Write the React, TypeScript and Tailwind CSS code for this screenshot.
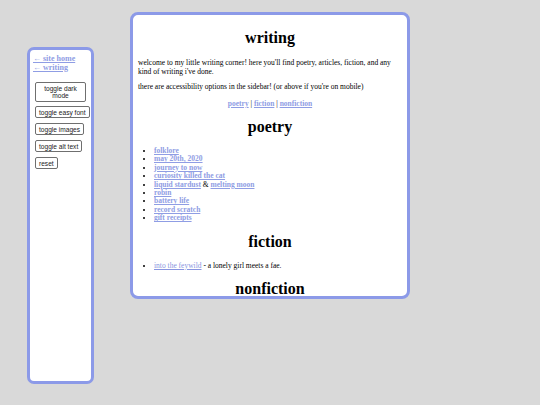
import React from "react";

const linkCls = "text-[#8f9de4] font-bold underline";
const btnCls =
  "h-[12px] bg-white border border-[#6f6f6f] rounded-[2px] text-[6.6px] leading-[7px] text-[#222] px-[3px] whitespace-nowrap";

export default function App() {
  const poems = [
    "folklore",
    "may 20th, 2020",
    "journey to now",
    "curiosity killed the cat",
  ];
  const poems2 = ["robin", "battery life", "record scratch", "gift receipts"];
  return (
    <div
      className="w-[540px] h-[405px] bg-[#d9d9d9] flex items-start overflow-hidden"
      style={{ fontFamily: '"Liberation Serif", "Times New Roman", serif' }}
    >
      <div className="ml-[27px] mt-[47px] w-[67px] h-[337px] bg-white border-[3px] border-[#8c9ae8] rounded-[7px] px-[3px] pt-[4px] flex flex-col">
        <a className={linkCls + " text-[8px] leading-[9px]"}>← site home</a>
        <a className={linkCls + " text-[8px] leading-[9px]"}>← writing</a>
        <div
          className="flex flex-col items-start gap-[5px] mt-[10px] ml-[2px]"
          style={{ fontFamily: '"Liberation Sans", Arial, sans-serif' }}
        >
          <button className="w-[51px] h-[20px] -mb-[1px] bg-white border border-[#6f6f6f] rounded-[2px] text-[6.6px] leading-[7px] text-[#222] px-[3px]">
            toggle dark
            <br />
            mode
          </button>
          <button className={btnCls}>toggle easy font</button>
          <button className={btnCls}>toggle images</button>
          <button className={btnCls}>toggle alt text</button>
          <button className={btnCls}>reset</button>
        </div>
      </div>
      <div className="ml-[36px] mt-[12px] w-[280px] h-[287px] bg-white border-[3px] border-[#8c9ae8] rounded-[8px] px-[5px] overflow-hidden text-black">
        <h1 className="text-[16px] leading-[18px] font-bold text-center mt-[14px]">writing</h1>
        <p className="text-[7.5px] leading-[9px] mt-[11px]">
          welcome to my little writing corner! here you'll find poetry, articles, fiction, and any kind of writing i've done.
        </p>
        <p className="text-[7.5px] leading-[9px] mt-[6px]">
          there are accessibility options in the sidebar! (or above if you're on mobile)
        </p>
        <p className="text-[7.5px] leading-[9px] mt-[8px] text-center">
          <a className={linkCls}>poetry</a> | <a className={linkCls}>fiction</a> |{" "}
          <a className={linkCls}>nonfiction</a>
        </p>
        <h1 className="text-[16px] leading-[18px] font-bold text-center mt-[10px]">poetry</h1>
        <ul className="list-disc pl-[16px] text-[7.5px] leading-[8.4px] mt-[11px]">
          {poems.map((p) => (
            <li key={p}>
              <a className={linkCls}>{p}</a>
            </li>
          ))}
          <li>
            <a className={linkCls}>liquid stardust</a> &amp; <a className={linkCls}>melting moon</a>
          </li>
          {poems2.map((p) => (
            <li key={p}>
              <a className={linkCls}>{p}</a>
            </li>
          ))}
        </ul>
        <h1 className="text-[16px] leading-[18px] font-bold text-center mt-[10px]">fiction</h1>
        <ul className="list-disc pl-[16px] text-[7.5px] leading-[9px] mt-[10px]">
          <li>
            <a className="text-[#8895e0] underline">into the feywild</a> - a lonely girl meets a fae.
          </li>
        </ul>
        <h1 className="text-[16px] leading-[18px] font-bold text-center mt-[10px]">nonfiction</h1>
      </div>
    </div>
  );
}
